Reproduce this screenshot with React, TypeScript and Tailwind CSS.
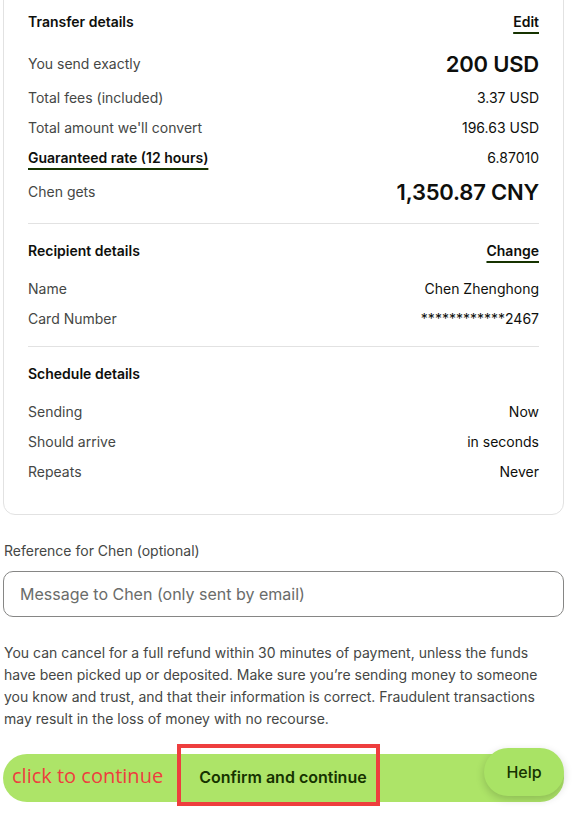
import React from "react";

type Row = { label: string; value: string; big?: boolean; link?: boolean };

const transfer: Row[] = [
  { label: "You send exactly", value: "200 USD", big: true },
  { label: "Total fees (included)", value: "3.37 USD" },
  { label: "Total amount we'll convert", value: "196.63 USD" },
  { label: "Guaranteed rate (12 hours)", value: "6.87010", link: true },
  { label: "Chen gets", value: "1,350.87 CNY", big: true },
];

const recipient: Row[] = [
  { label: "Name", value: "Chen Zhenghong" },
  { label: "Card Number", value: "************2467" },
];

const schedule: Row[] = [
  { label: "Sending", value: "Now" },
  { label: "Should arrive", value: "in seconds" },
  { label: "Repeats", value: "Never" },
];

const Section = ({ title, action, rows }: { title: string; action?: string; rows: Row[] }) => (
  <div>
    <div className="flex h-5 items-center justify-between">
      <h3 className="text-sm font-semibold text-[#0e0f0c]">{title}</h3>
      {action && (
        <a className="text-sm font-semibold text-[#0e0f0c] underline decoration-[#163300] decoration-[1.5px] underline-offset-[5px]">
          {action}
        </a>
      )}
    </div>
    <div className="mt-[18px] flex flex-col gap-[10px]">
      {rows.map((r) => (
        <div key={r.label} className={`flex items-center justify-between ${r.big ? "h-7" : "h-5"}`}>
          <span
            className={
              r.link
                ? "text-sm font-semibold text-[#0e0f0c] underline decoration-[#163300] decoration-[1.5px] underline-offset-[5px]"
                : "text-sm text-[#454745]"
            }
          >
            {r.label}
          </span>
          <span
            className={
              r.big
                ? "text-[22px] font-semibold tracking-[-0.2px] text-[#0e0f0c]"
                : "text-sm text-[#0e0f0c]"
            }
          >
            {r.value}
          </span>
        </div>
      ))}
    </div>
  </div>
);

export default function App() {
  return (
    <div className="min-h-screen overflow-hidden bg-white pl-[3px] pr-[18px] font-['Inter',sans-serif]">
      <div className="mt-[-13px] rounded-xl border border-[#e2e2e2] px-6 pt-6 pb-8">
        <Section title="Transfer details" action="Edit" rows={transfer} />
        <hr className="my-[17px] border-[#e2e2e2]" />
        <Section title="Recipient details" action="Change" rows={recipient} />
        <hr className="my-[17px] border-[#e2e2e2]" />
        <Section title="Schedule details" rows={schedule} />
      </div>

      <label className="mt-[26px] block pl-px text-sm leading-5 text-[#454745]">
        Reference for Chen (optional)
      </label>
      <input
        className="mt-[10px] h-[46px] w-full rounded-[10px] border border-[#868685] px-4 text-base text-[#0e0f0c] placeholder:text-[#6a6c6a] outline-none"
        placeholder="Message to Chen (only sent by email)"
      />

      <p className="mt-[25px] pl-px pr-1 text-sm leading-[22px] text-[#454745]">
        You can cancel for a full refund within 30 minutes of payment, unless the funds have been picked up or
        deposited. Make sure you’re sending money to someone you know and trust, and that their information is
        correct. Fraudulent transactions may result in the loss of money with no recourse.
      </p>

      <div className="relative mt-[14px] h-[62px]">
        <div className="absolute inset-x-0 top-[10px] h-12 rounded-full bg-[#ade468]" />
        <div className="relative flex h-full items-start">
          <span className="mt-[20px] pl-[9px] font-['Open_Sans',sans-serif] text-[20px] leading-6 text-[#ee3e3e]">
            click to continue
          </span>
          <button className="ml-[14px] flex h-[62px] items-center border-4 border-[#ee3e3e] pl-[18px] pr-[9px] pt-1 text-base font-semibold text-[#163300]">
            Confirm and continue
          </button>
        </div>
        <button className="absolute right-0 top-[4px] h-12 w-20 rounded-full bg-[#a9e365] text-base font-medium text-[#163300] shadow-[0_3px_8px_rgba(0,0,0,0.18)]">
          Help
        </button>
      </div>
    </div>
  );
}
